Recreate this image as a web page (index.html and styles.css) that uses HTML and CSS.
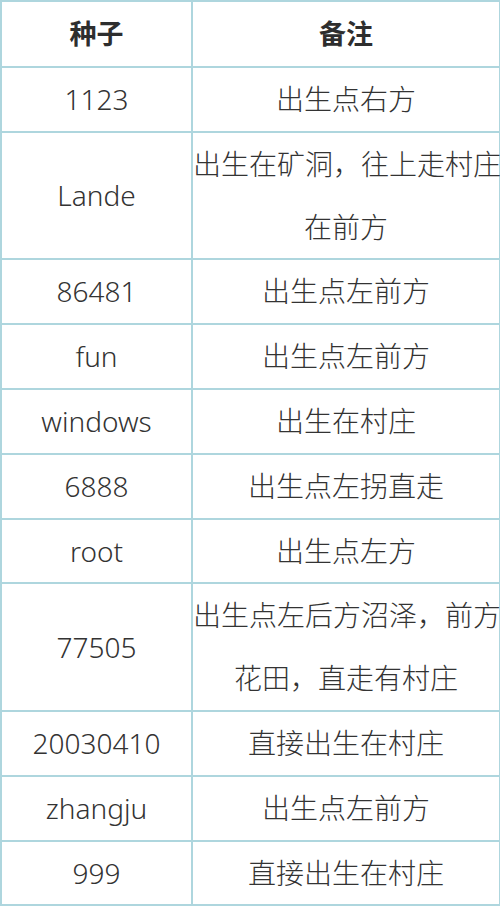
FILE: index.html
```html
<!DOCTYPE html>
<html lang="zh">
<head>
<meta charset="utf-8">
<link rel="stylesheet" href="styles.css">
</head>
<body>
<table class="seeds">
  <colgroup><col class="c1"><col class="c2"></colgroup>
  <thead>
    <tr><th>种子</th><th>备注</th></tr>
  </thead>
  <tbody>
    <tr><td>1123</td><td>出生点右方</td></tr>
    <tr><td>Lande</td><td>出生在矿洞，往上走村庄<br>在前方</td></tr>
    <tr><td>86481</td><td>出生点左前方</td></tr>
    <tr><td>fun</td><td>出生点左前方</td></tr>
    <tr><td>windows</td><td>出生在村庄</td></tr>
    <tr><td>6888</td><td>出生点左拐直走</td></tr>
    <tr><td>root</td><td>出生点左方</td></tr>
    <tr><td>77505</td><td>出生点左后方沼泽，前方<br>花田，直走有村庄</td></tr>
    <tr><td>20030410</td><td>直接出生在村庄</td></tr>
    <tr><td>zhangju</td><td>出生点左前方</td></tr>
    <tr><td>999</td><td>直接出生在村庄</td></tr>
  </tbody>
</table>
</body>
</html>
```
FILE: styles.css
```css
html, body {
  margin: 0;
  padding: 0;
  background: #ffffff;
}
.seeds {
  border-collapse: collapse;
  width: 499px;
  table-layout: fixed;
  font-family: "Noto Sans", "Noto Sans CJK SC", sans-serif;
  color: #333333;
}
.c1 { width: 191px; }
.c2 { width: 308px; }
.seeds th,
.seeds td {
  border: 2px solid #aed6de;
  padding: 0;
  text-align: center;
  vertical-align: middle;
  font-size: 28px;
  font-weight: 300;
  line-height: 62.8px;
  white-space: nowrap;
}
.seeds th {
  font-weight: bold;
  line-height: 64px;
  font-size: 27px;
  color: #2e2e2e;
}
```
